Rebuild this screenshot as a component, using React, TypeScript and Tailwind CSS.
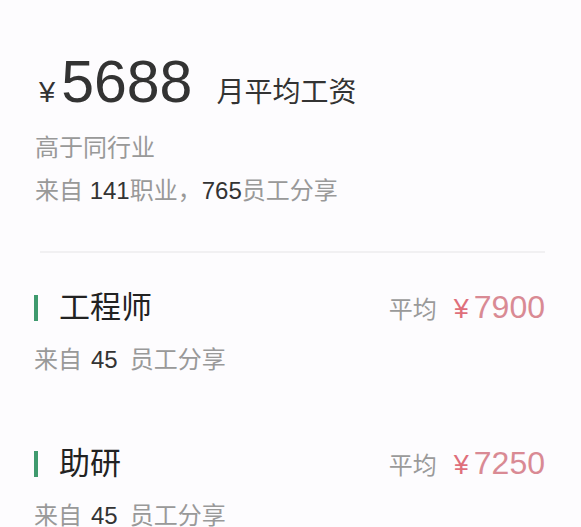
import React from "react";

const font = { fontFamily: '"Liberation Sans", "Noto Sans CJK SC", sans-serif' };

function Item({ title, price, top }: { title: string; price: string; top: string }) {
  return (
    <div className={top}>
      <div className="flex items-center justify-between pr-[36px]">
        <div className="flex items-center">
          <div className="ml-[34px] h-[26px] w-[4px] bg-[#3f9a6e]" />
          <div className="ml-[21px] text-[31px] leading-[40px] text-[#222]">{title}</div>
        </div>
        <div className="flex items-baseline">
          <span className="text-[24px] text-[#9a9a9a]">平均</span>
          <span className="ml-[17px] text-[27px] leading-[40px] text-[#df6f7b]">¥</span>
          <span className="ml-[5px] text-[32px] leading-[40px] text-[#d98a94]">{price}</span>
        </div>
      </div>
      <div className="mt-[16px] pl-[34px] text-[24px] leading-[30px] text-[#999] flex">
        <span>来自</span>
        <span className="ml-[9px] mr-[12px] text-[#333]">45</span>
        <span>员工分享</span>
      </div>
    </div>
  );
}

export default function App() {
  return (
    <div className="w-[581px] h-[527px] overflow-hidden bg-[#fdfcfe]" style={font}>
      <div className="pt-[50px] pl-[39px] flex items-baseline">
        <span className="text-[29px] text-[#333]">¥</span>
        <span className="ml-[6px] text-[59px] leading-[64px] text-[#333]">5688</span>
        <span className="ml-[24px] text-[28px] text-[#333]">月平均工资</span>
      </div>
      <div className="mt-[18px] pl-[35px] text-[24px] leading-[30px] text-[#999]">高于同行业</div>
      <div className="mt-[13px] pl-[35px] text-[24px] leading-[30px] text-[#999]">
        来自 <span className="text-[#333]">141</span>职业，<span className="text-[#333]">765</span>员工分享
      </div>
      <div className="mx-[40px] mt-[45px] h-[2px] w-[505px] bg-[#f1f0f2]" />
      <Item title="工程师" price="7900" top="mt-[34px]" />
      <Item title="助研" price="7250" top="mt-[68px]" />
    </div>
  );
}
